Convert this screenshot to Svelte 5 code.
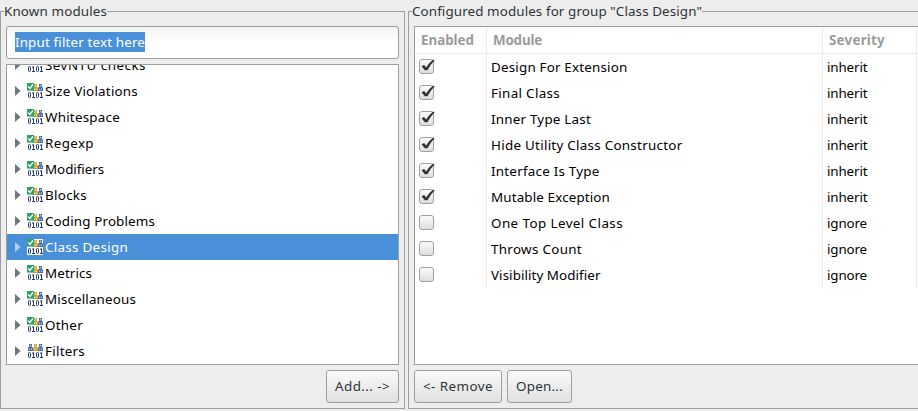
<script>
  const modules = [
    { name: 'SevNTU checks', width: 101 },
    { name: 'Size Violations', width: 93 },
    { name: 'Whitespace', width: 75 },
    { name: 'Regexp', width: 49 },
    { name: 'Modifiers', width: 59 },
    { name: 'Blocks', width: 42 },
    { name: 'Coding Problems', width: 110 },
    { name: 'Class Design', width: 83, selected: true },
    { name: 'Metrics', width: 47 },
    { name: 'Miscellaneous', width: 91 },
    { name: 'Other', width: 38 },
    { name: 'Filters', width: 40, filter: true }
  ];
  const checks = [
    { name: 'Design For Extension', width: 136.5, on: true },
    { name: 'Final Class', width: 69, on: true },
    { name: 'Inner Type Last', width: 100, on: true },
    { name: 'Hide Utility Class Constructor', width: 191.5, on: true },
    { name: 'Interface Is Type', width: 108.5, on: true },
    { name: 'Mutable Exception', width: 119, on: true },
    { name: 'One Top Level Class', width: 132, on: false },
    { name: 'Throws Count', width: 91, on: false },
    { name: 'Visibility Modifier', width: 109.5, on: false }
  ];

  // Spreads a label's letters so that it takes the given width.
  function fit(node, width) {
    const natural = node.getBoundingClientRect().width;
    node.style.letterSpacing = (width - natural) / node.textContent.length + 'px';
  }
</script>

{#snippet person(x, color, light)}
  <path d="M{x + 1} 1h3v2.6h-3zM{x} 5l1-1.2h3L{x + 5} 5v3h-5z" fill={color} />
  <path d="M{x + 2} 1.8h1.1v1.2h-1.1zM{x + 1.2} 5.4h1v1.6h-1zM{x + 3} 5.4h.9v1.6h-.9z" fill={light} />
{/snippet}

{#snippet icon(filter, selected)}
  <svg class="icon" width="16" height="16" viewBox="0 0 16 16">
    {#if selected}<path d="M0 0h16v16H0z" fill="#fff" />{/if}
    {@render person(11, '#4b68a6', '#c3d0ea')}
    {@render person(6, '#c9a227', '#f6e7a4')}
    {#if filter}
      {@render person(1, '#4b68a6', '#c3d0ea')}
    {:else}
      <path d="M0 0h7v7.6H0z" fill="#27a365" />
      <path d="M1.2 3.4l1.8 2 3-4" fill="none" stroke="#fff" stroke-width="1.5" />
    {/if}
    <g fill="none" stroke="#263c70" stroke-width="1">
      <rect x="1.5" y="9.5" width="2" height="5" rx=".8" />
      <path d="M5 10.4l1.5-.9v5M5 14.5h3" />
      <rect x="9.5" y="9.5" width="2" height="5" rx=".8" />
      <path d="M13 10.4l1.5-.9v5M13 14.5h3" />
    </g>
  </svg>
{/snippet}

<div class="window">
  <section class="group known">
    <h2><span use:fit={103}>Known modules</span></h2>
    <div class="filter"><span class="marked"><span use:fit={130}>Input filter text here</span></span></div>
    <div class="tree">
      <ul>
        {#each modules as m}
          <li class:selected={m.selected}>
            <svg class="arrow" width="6" height="10" viewBox="0 0 6 10"><path d="M0 0l5.6 5L0 10z" /></svg>
            {@render icon(m.filter, m.selected)}
            <span class="label" use:fit={m.width}>{m.name}</span>
          </li>
        {/each}
      </ul>
    </div>
    <div class="buttons end">
      <button style:width="73px"><span use:fit={55}>Add... -&gt;</span></button>
    </div>
  </section>

  <section class="group configured">
    <h2><span use:fit={290}>Configured modules for group "Class Design"</span></h2>
    <div class="table">
      <div class="row head">
        <div class="cell enabled"><span use:fit={53}>Enabled</span></div>
        <div class="cell module"><span use:fit={49}>Module</span></div>
        <div class="cell severity"><span use:fit={56}>Severity</span></div>
      </div>
      {#each checks as c}
        <div class="row">
          <div class="cell enabled">
            <span class="box">
              {#if c.on}
                <svg width="15" height="13" viewBox="0 0 15 13"><path d="M1.6 6.2l2.5-1.2 2 2.4Q9.2 2.6 13 -.2l1.8.2Q10.2 5 7.4 10.2H4.8z" /></svg>
              {/if}
            </span>
          </div>
          <div class="cell module"><span use:fit={c.width}>{c.name}</span></div>
          <div class="cell severity"><span use:fit={c.on ? 40.5 : 40}>{c.on ? 'inherit' : 'ignore'}</span></div>
        </div>
      {/each}
    </div>
    <div class="buttons">
      <button style:width="88px"><span use:fit={70}>&lt;- Remove</span></button>
      <button style:width="65px"><span use:fit={47}>Open...</span></button>
    </div>
  </section>
</div>

<style>
  .window {
    box-sizing: border-box;
    width: 918px;
    height: 411px;
    padding-top: 11px;
    overflow: hidden;
    display: flex;
    gap: 3px;
    background: #ededed;
    color: #2e3436;
    font: 13.4px/20px 'Noto Sans', 'Open Sans', sans-serif;
    white-space: nowrap;
  }
  .window :is(span) { display: inline-block; }
  .group {
    box-sizing: border-box;
    flex: none;
    height: 398px;
    border: 1px solid #9c9d9c;
    padding: 0 5px;
    display: flex;
    flex-direction: column;
  }
  .known { width: 405px; }
  .configured { width: 530px; }
  h2 {
    align-self: flex-start;
    margin: -11px 0 5px -2px;
    height: 20px;
    background: #ededed;
    font: inherit;
  }
  .filter {
    box-sizing: border-box;
    height: 33px;
    border: 1px solid #9c9d9c;
    border-radius: 3px;
    background: linear-gradient(#f2f2f2, #fff 14px);
    padding: 5px 8px;
  }
  .marked { height: 20px; background: #4a90d9; color: #fff; }
  .tree {
    box-sizing: border-box;
    height: 301px;
    margin-top: 5px;
    border: 1px solid #9c9d9c;
    background: #fff;
    overflow: hidden;
  }
  ul { list-style: none; margin: -13px 0 0; padding: 0; }
  li { height: 26px; display: flex; align-items: center; padding-left: 8px; color: #000; }
  .arrow { fill: #70777a; margin-right: 6px; }
  .icon { margin-right: 2px; }
  .selected { background: #4a90d9; color: #fff; }
  .selected .arrow { fill: #b1d0f0; }
  .table {
    box-sizing: border-box;
    height: 339px;
    border: 1px solid #9c9d9c;
    background: #fff;
    color: #000;
  }
  .row { display: flex; height: 26px; }
  .cell { box-sizing: border-box; flex: none; border-right: 1px solid #ececec; padding: 3px 0 0 4px; }
  .enabled { width: 72px; }
  .module { width: 336px; }
  .severity { width: 94px; }
  .head { height: 26px; border-bottom: 1px solid #ececec; color: #9a9c9a; font-weight: bold; }
  .head .cell { padding-left: 6px; }
  .box {
    box-sizing: border-box;
    width: 15px;
    height: 15px;
    margin-top: 2px;
    border: 1px solid #a0a2a0;
    border-radius: 3px;
    background: linear-gradient(#fafafa, #dedede);
  }
  .box svg { display: block; overflow: visible; }
  .box path { fill: #2e3436; }
  .buttons { display: flex; gap: 5px; margin-top: 5px; }
  .end { justify-content: flex-end; }
  button {
    box-sizing: border-box;
    height: 33px;
    padding: 0 0 2px;
    border: 1px solid #9c9d9c;
    border-radius: 3px;
    background: linear-gradient(#fafafa, #e0e0e0);
    color: #2e3436;
    font: inherit;
  }
</style>
